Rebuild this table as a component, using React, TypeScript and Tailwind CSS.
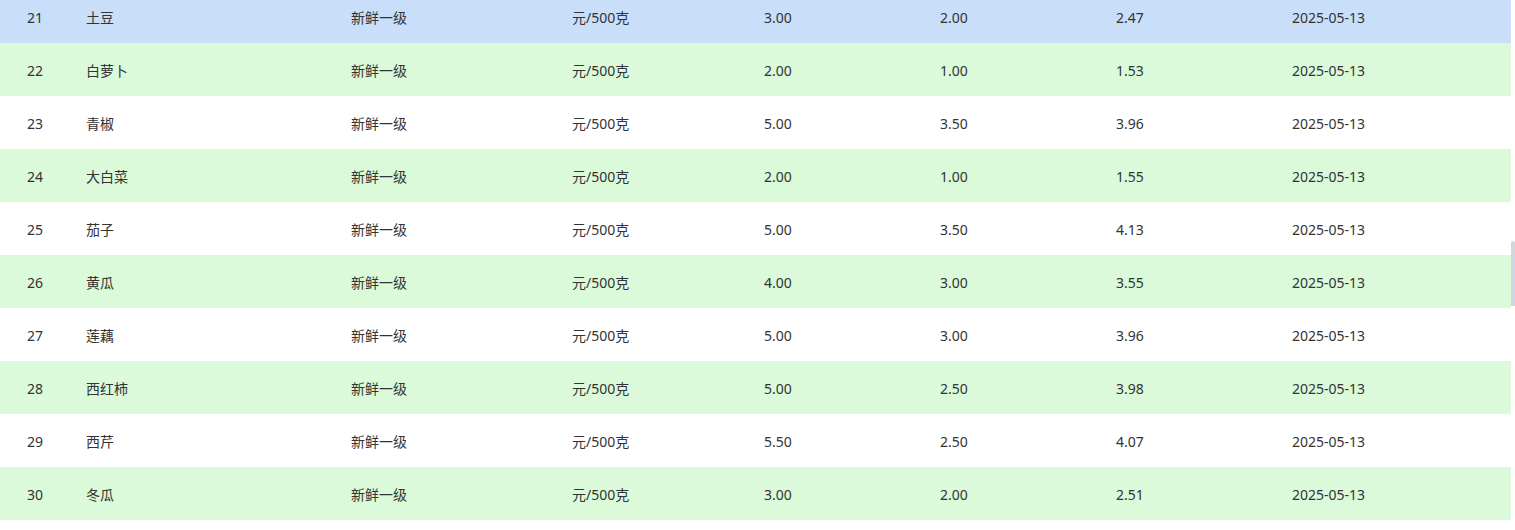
import React from "react";

type PriceRow = {
  id: number;
  name: string;
  grade: string;
  unit: string;
  high: string;
  low: string;
  avg: string;
  date: string;
};

const rows: PriceRow[] = [
  { id: 21, name: "土豆", grade: "新鲜一级", unit: "元/500克", high: "3.00", low: "2.00", avg: "2.47", date: "2025-05-13" },
  { id: 22, name: "白萝卜", grade: "新鲜一级", unit: "元/500克", high: "2.00", low: "1.00", avg: "1.53", date: "2025-05-13" },
  { id: 23, name: "青椒", grade: "新鲜一级", unit: "元/500克", high: "5.00", low: "3.50", avg: "3.96", date: "2025-05-13" },
  { id: 24, name: "大白菜", grade: "新鲜一级", unit: "元/500克", high: "2.00", low: "1.00", avg: "1.55", date: "2025-05-13" },
  { id: 25, name: "茄子", grade: "新鲜一级", unit: "元/500克", high: "5.00", low: "3.50", avg: "4.13", date: "2025-05-13" },
  { id: 26, name: "黄瓜", grade: "新鲜一级", unit: "元/500克", high: "4.00", low: "3.00", avg: "3.55", date: "2025-05-13" },
  { id: 27, name: "莲藕", grade: "新鲜一级", unit: "元/500克", high: "5.00", low: "3.00", avg: "3.96", date: "2025-05-13" },
  { id: 28, name: "西红柿", grade: "新鲜一级", unit: "元/500克", high: "5.00", low: "2.50", avg: "3.98", date: "2025-05-13" },
  { id: 29, name: "西芹", grade: "新鲜一级", unit: "元/500克", high: "5.50", low: "2.50", avg: "4.07", date: "2025-05-13" },
  { id: 30, name: "冬瓜", grade: "新鲜一级", unit: "元/500克", high: "3.00", low: "2.00", avg: "2.51", date: "2025-05-13" },
];

function App() {
  return (
    <div
      className="flex h-[530px] w-[1515px] overflow-hidden bg-white text-[14px] text-[#333333]"
      style={{ fontFamily: '"Noto Sans", "Noto Sans CJK SC", sans-serif' }}
    >
      <div className="-mt-[10px] flex w-[1511px] flex-col">
        {rows.map((row, index) => {
          const bg =
            index === 0 ? "bg-[#c9def9]" : index % 2 === 1 ? "bg-[#dafada]" : "bg-white";
          return (
            <div
              key={row.id}
              className={`grid h-[53px] grid-cols-[86px_265px_221px_192px_176px_176px_176px_1fr] items-center pt-[2px] ${bg}`}
            >
              <div className="pl-[27px]">{row.id}</div>
              <div>{row.name}</div>
              <div>{row.grade}</div>
              <div>{row.unit}</div>
              <div>{row.high}</div>
              <div>{row.low}</div>
              <div>{row.avg}</div>
              <div>{row.date}</div>
            </div>
          );
        })}
      </div>
      <div className="flex w-[4px] flex-col">
        <div className="mt-[241px] h-[65px] w-[4px] rounded-t-[2px] bg-[#d1d7e0]" />
      </div>
    </div>
  );
}

export default App;
